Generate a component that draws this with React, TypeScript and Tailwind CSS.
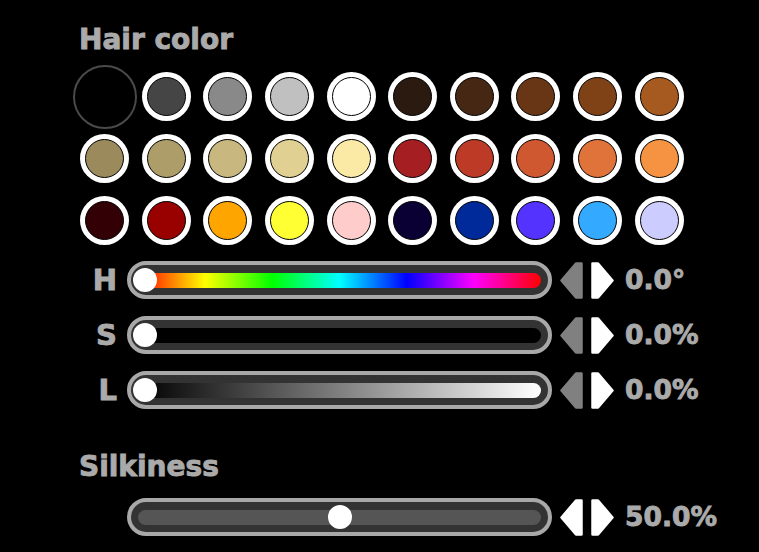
import { useState } from "react";

const SWATCHES = [
  ["#000000", "#454545", "#898989", "#c0c0c0", "#ffffff", "#2b1a10", "#452714", "#693615", "#7f4217", "#a65a1f"],
  ["#9a8a5c", "#ad9d68", "#c8b880", "#e0d091", "#faeaa6", "#a41e22", "#bc3a26", "#d05830", "#e0733a", "#f59342"],
  ["#330005", "#990000", "#ffa500", "#ffff33", "#ffcccc", "#0a0033", "#002a99", "#5533ff", "#33aaff", "#ccccff"],
];

function Arrow({ dir, active }: { dir: "left" | "right"; active: boolean }) {
  const color = active ? "#ffffff" : "#808080";
  const points =
    dir === "left" ? "1.5,18.5 16,1.5 21.5,1.5 21.5,35.5 16,35.5" : "1.5,1.5 7,1.5 21.5,18.5 7,35.5 1.5,35.5";
  return (
    <svg width="23" height="37" viewBox="0 0 23 37">
      <polygon points={points} fill={color} stroke={color} strokeWidth="2.5" strokeLinejoin="round" />
    </svg>
  );
}

function Slider({
  label,
  value,
  unit,
  barClass,
}: {
  label?: string;
  value: number;
  unit: string;
  barClass: string;
}) {
  const pct = value / 100;
  return (
    <div className="flex items-center h-[38px]">
      <div className="w-[53px] pr-[10px] text-right text-[29px] leading-none">{label}</div>
      <div className="w-[425px] h-[38px] rounded-full border-4 border-[#a8a8a8] bg-[#333333] px-[7px] flex items-center">
        <div className={`relative w-full h-[15px] rounded-full ${barClass}`}>
          <div
            className="absolute top-1/2 -translate-y-1/2 -translate-x-1/2 w-[24px] h-[24px] rounded-full bg-white"
            style={{ left: `calc(7px + ${pct} * (100% - 14px))` }}
          />
        </div>
      </div>
      <div className="ml-[8px] flex gap-[8px]">
        <Arrow dir="left" active={value > 0} />
        <Arrow dir="right" active={value < 100} />
      </div>
      <div className="ml-[11px] text-[26.5px] leading-none">
        {(label === "H" ? value * 3.6 : value).toFixed(1)}
        {unit}
      </div>
    </div>
  );
}

export default function App() {
  const [selected, setSelected] = useState("0-0");

  return (
    <div className="w-[759px] h-[552px] bg-black overflow-hidden font-['DejaVu_Sans',sans-serif] font-bold text-[#aaaaaa] [-webkit-text-stroke:0.9px_#aaaaaa]">
      <div className="pl-[74px] pt-[25px]">
        <h2 className="pl-[5px] text-[28px] leading-[30px]">Hair color</h2>

        {/* Swatches */}
        <div className="mt-[10.5px] grid grid-cols-[repeat(10,61.6px)] auto-rows-[62px] place-items-center">
          {SWATCHES.map((row, r) =>
            row.map((c, i) => {
              const key = `${r}-${i}`;
              return selected === key ? (
                <div
                  key={key}
                  onClick={() => setSelected(key)}
                  className="w-[64px] h-[64px] rounded-full border-2 border-[#4a4a4a]"
                  style={{ backgroundColor: c }}
                />
              ) : (
                <div
                  key={key}
                  onClick={() => setSelected(key)}
                  className="w-[49px] h-[49px] rounded-full bg-white p-[5px]"
                >
                  <div className="w-full h-full rounded-full border-[1.5px] border-black" style={{ backgroundColor: c }} />
                </div>
              );
            })
          )}
        </div>

        {/* HSL */}
        <div className="mt-[9.5px] flex flex-col gap-[17px]">
          <Slider
            label="H"
            value={0}
            unit="°"
            barClass="bg-[linear-gradient(to_right,#ff0000,#ffff00,#00ff00,#00ffff,#0000ff,#ff00ff,#ff0000)]"
          />
          <Slider label="S" value={0} unit="%" barClass="bg-black" />
          <Slider label="L" value={0} unit="%" barClass="bg-[linear-gradient(to_right,#000000,#ffffff)]" />
        </div>

        <h2 className="mt-[43px] pl-[5px] text-[28px] leading-[30px]">Silkiness</h2>
        <div className="mt-[16px]">
          <Slider value={50} unit="%" barClass="bg-[#555555]" />
        </div>
      </div>
    </div>
  );
}
